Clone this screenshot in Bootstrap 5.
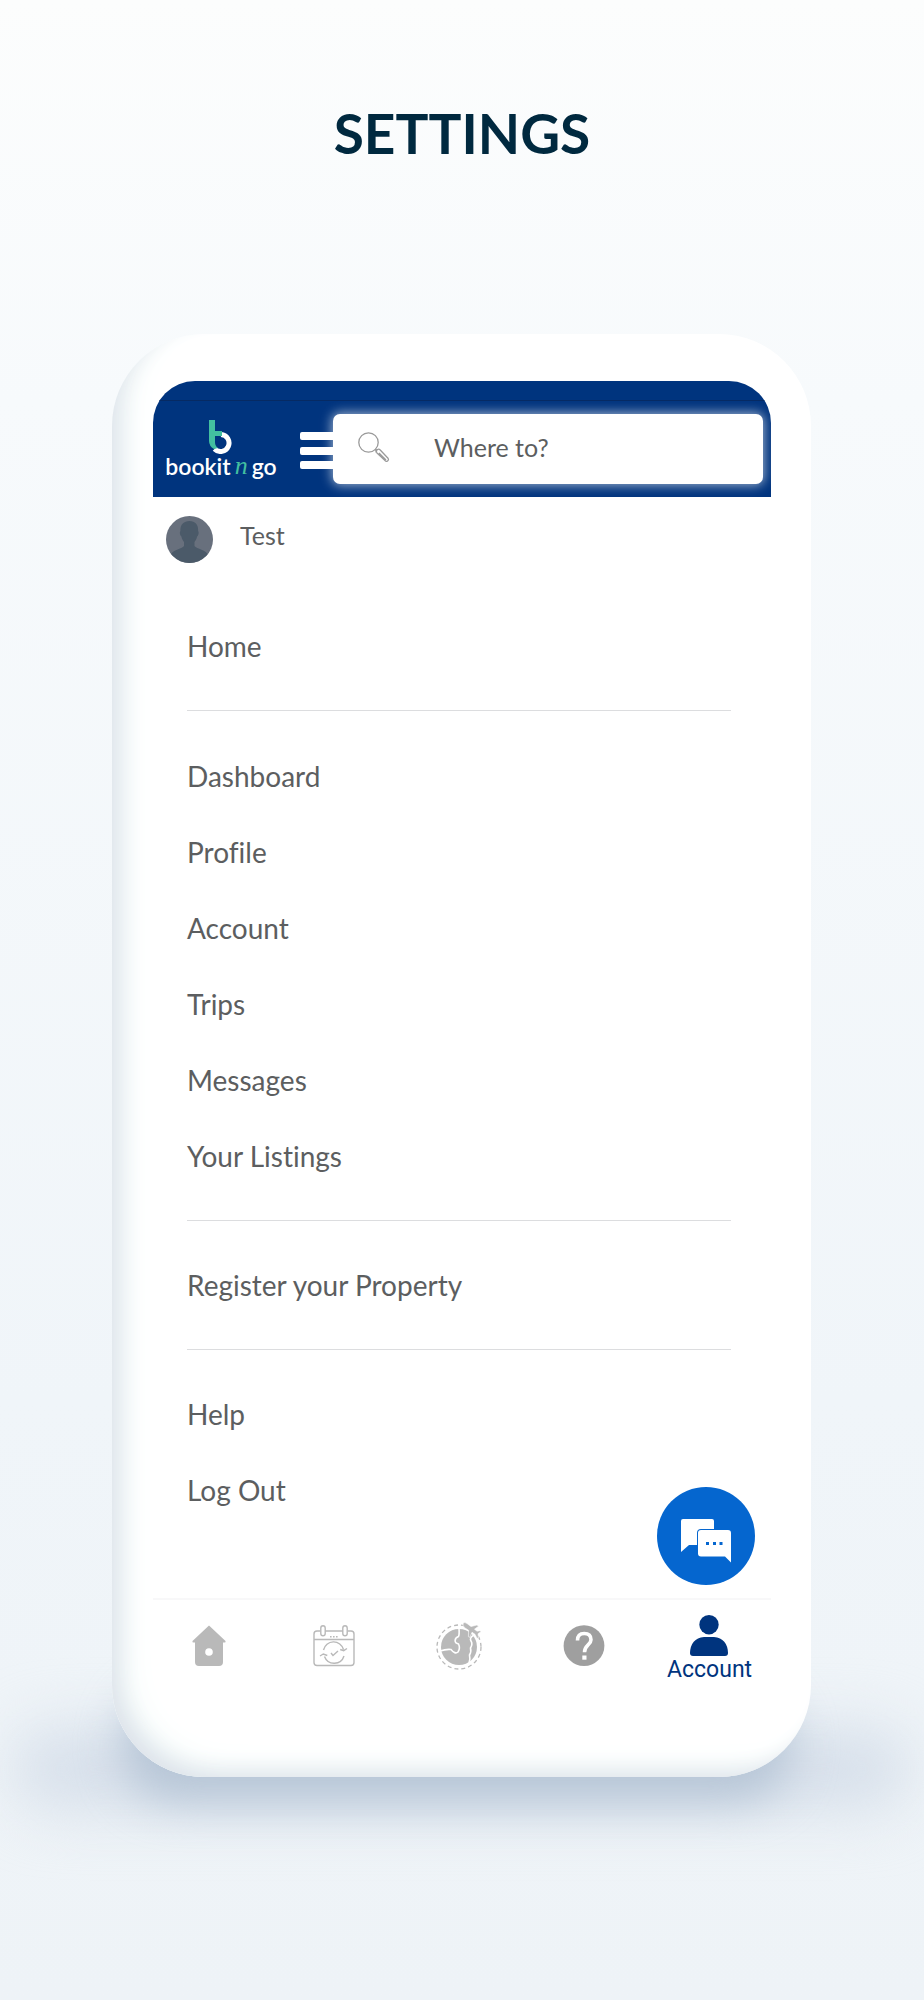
<!DOCTYPE html>
<html lang="en">
<head>
<meta charset="utf-8">
<meta name="viewport" content="width=device-width, initial-scale=1">
<title>Settings</title>
<link href="https://cdn.jsdelivr.net/npm/bootstrap@5.3.0/dist/css/bootstrap.min.css" rel="stylesheet">
<style>
  :root { --navy: #00347e; --mint: #43bfa0; --ink: #5c5e60; }
  body {
    min-height: 100vh; overflow-x: hidden; color: var(--ink);
    font-family: Lato, "Open Sans", sans-serif; font-size: 25px; line-height: 30px; font-variant-ligatures: none;
    background: linear-gradient(#fcfdfd 0, #f7fafc 20%, #f0f5f9 70%, #eef3f7 100%) no-repeat #eef3f7;
  }
  .page-title { margin: 100px 0 168px; font-size: 55px; line-height: 66px; font-weight: 700; color: #00293f; }
  .stage { padding: 0 113px 0 112px; }
  .phone { isolation: isolate; }
  .phone::before, .phone::after { content: ""; position: absolute; z-index: -1; border-radius: 60px; }
  .phone::before { left: 10px; right: 20px; bottom: -24px; height: 110px; background: #b6c5d6; filter: blur(22px); }
  .phone::after { left: -100px; right: -100px; bottom: -32px; height: 80px; background: #d6dfea; filter: blur(30px); z-index: -2; }
  .shell {
    padding: 47px 40px 0 41px; border-radius: 92px; background: #fff;
    box-shadow: inset 14px -12px 22px -8px #dde2ea, inset 26px -20px 34px -14px #eef8f7;
  }
  .screen-top { background: var(--navy); border-radius: 42px 42px 0 0; }
  .status-strip { height: 20px; border-bottom: 1px solid #062a63; }
  .bar { padding: 13px 8px 13px 10px; }
  .brand { width: 116px; color: #fff; font-size: 23px; line-height: 24px; font-weight: 600; text-decoration: none; }
  .brand-n { color: var(--mint); font-family: "Liberation Serif", serif; font-style: italic; font-weight: 400; font-size: 26px; }
  .burger { width: 40px; margin: 4px -7px 0 21px; }
  .search { height: 70px; }
  .search-icon { left: 24px; top: 17px; }
  .search-box {
    height: 70px; padding: 0 16px 4px 101px; border: 0; border-radius: 7px; font-size: 25px; color: var(--ink);
    box-shadow: 0 0 12px 1px rgba(255,255,255,.65);
  }
  .search-box::placeholder { color: var(--ink); }
  .profile { padding: 19px 12px 45px 13px; gap: 27px; }
  .menu { padding: 0 40px 70px 34px; }
  .menu a { display: block; height: 76px; font-size: 28px; line-height: 76px; color: var(--ink); text-decoration: none; }
  .menu hr { margin: 26px 0; border: 0; height: 1px; background: #dcdddf; opacity: 1; }
  .menu hr:first-of-type { margin-bottom: 27px; }
  .chat { right: 16px; bottom: 13px; width: 98px; height: 98px; background: #0566cf; }
  .tabs { height: 179px; padding: 15px 20px 0 14px; border-top: 2px solid #f8f8f9; }
  .tabs a { width: 84px; color: #b9b9b9; text-decoration: none; }
  .tabs a.idle { padding-top: 6px; }
  .tabs a.current { color: var(--navy); font-family: Roboto, sans-serif; font-size: 23px; line-height: 26px; }
</style>
</head>
<body>
<h1 class="page-title text-center">SETTINGS</h1>
<main class="stage">
  <div class="phone position-relative">
    <div class="shell">
      <header class="screen-top overflow-hidden">
        <div class="status-strip"></div>
        <div class="bar d-flex align-items-center">
          <a class="brand d-flex flex-column align-items-center flex-shrink-0" href="#">
            <svg width="26" height="34" viewBox="0 0 26 34" aria-hidden="true">
              <path d="M13 14.500a8.500 8.500 0 1 1-6.500 14.500" fill="none" stroke="#fff" stroke-width="5"/>
              <path d="M1 0h6v11h7v5H7v6q0 4 3 6l-4 1q-5-3-5-8z" fill="#43bfa0"/>
            </svg>
            <span class="d-flex align-items-center">bookit<span class="brand-n px-1">n</span>go</span>
          </a>
          <button class="burger btn p-0 border-0 flex-shrink-0" type="button" aria-label="Open menu">
            <svg class="d-block" width="40" height="38" viewBox="0 0 40 38" fill="#fff"><rect y="0" width="40" height="8" rx="2"/><rect y="15" width="40" height="8" rx="2"/><rect y="29" width="40" height="8" rx="2"/></svg>
          </button>
          <div class="search position-relative flex-grow-1">
            <input id="where" class="search-box form-control" type="text" placeholder="Where to?">
            <label for="where" class="search-icon position-absolute" aria-label="Search destination">
              <svg class="d-block" width="34" height="34" viewBox="0 0 34 34" fill="none" stroke="#9a9a9a" stroke-width="1.300"><circle cx="11.500" cy="11.500" r="9.700"/><path d="M18 18.500l2 2M19 20l1.500-1.500q1.500-.8 2.500.3l8 8.400q1 1.300 0 2.500t-2.500.3l-8.500-8q-1.500-1.500-1-4zM22 22l7 7"/></svg>
            </label>
          </div>
        </div>
      </header>

      <div class="profile d-flex">
        <svg class="flex-shrink-0" width="47" height="47" viewBox="0 0 47 47" aria-hidden="true">
          <defs><clipPath id="face"><circle cx="23.500" cy="23.500" r="23.500"/></clipPath></defs>
          <g clip-path="url(#face)"><path d="M0 0h47v47H0z" fill="#68707d"/><path d="M23.500 5c6 0 9 4 8.600 10 1.200 1 .2 5-1 5.500-.6 3-1.600 4-2.600 5.500v4c2 3 12 3.500 14 10v8H4v-8c2-6.500 12-7 14-10v-4c-1-1.500-2-2.500-2.600-5.500-1.200-.5-2.200-4.500-1-5.500C14 9 17.500 5 23.500 5z" fill="#4b5a69"/></g>
        </svg>
        <span class="pt-1">Test</span>
      </div>

      <div class="position-relative">
        <nav class="menu" aria-label="Settings">
          <a href="#">Home</a>
          <hr>
          <a href="#">Dashboard</a>
          <a href="#">Profile</a>
          <a href="#">Account</a>
          <a href="#">Trips</a>
          <a href="#">Messages</a>
          <a href="#">Your Listings</a>
          <hr>
          <a href="#">Register your Property</a>
          <hr>
          <a href="#">Help</a>
          <a href="#">Log Out</a>
        </nav>
        <button class="chat btn p-0 border-0 rounded-circle position-absolute" type="button" aria-label="Chat">
          <svg class="d-block" width="98" height="98" viewBox="0 0 98 98">
            <path d="M26 32h29q2 0 2 2v8H44q-4 0-4 4v12h-8l-8 7V34q0-2 2-2z" fill="#fff"/>
            <path d="M44 43h27q3 0 3 3v29.500l-6-6H44q-3 0-3-3V46q0-3 3-3z" fill="#fff"/>
            <path d="M49 55h3v3h-3zM56 55h3v3h-3zM62.500 55h3v3h-3z" fill="#0566cf"/>
          </svg>
        </button>
      </div>

      <nav class="tabs d-flex justify-content-between" aria-label="Main">
        <a class="idle text-center" href="#" aria-label="Home">
          <svg class="d-block mx-auto" width="50" height="50" viewBox="0 0 50 50"><path d="M25 4.500L41.500 20q.5 1.500-1 1.500H39V41q0 4-4 4H15q-4 0-4-4V21.500H9.500q-1.500 0-1-1.500z" fill="#b9b9b9"/><circle cx="25" cy="31" r="3.800" fill="#fff"/></svg>
        </a>
        <a class="idle text-center" href="#" aria-label="Bookings">
          <svg class="d-block mx-auto" width="50" height="50" viewBox="0 0 50 50" fill="none" stroke="#b9b9b9" stroke-width="1.400"><path d="M11.500 10H8q-3 0-3 3v28.500Q5 44.500 8 44.500h34q3 0 3-3V13q0-3-3-3h-3.500M16 10h18M5 18.500h40"/><rect x="11.800" y="4.700" width="4.400" height="10" rx="2.200"/><rect x="33.800" y="4.700" width="4.400" height="10" rx="2.200"/><path d="M21 15.700h8" stroke-dasharray="1.600 1.400"/><path d="M14.500 29a10.300 10.300 0 0 1 20-.500M35 35a10.300 10.300 0 0 1-19.500.500M38 27.500l-3.300 2.200-3.500-1.200M11 35l3.300-2 4 1.500M22 32l2 2.500 5-4.500"/></svg>
        </a>
        <a class="idle text-center" href="#" aria-label="Trips">
          <svg class="d-block mx-auto" width="50" height="50" viewBox="0 0 50 50"><circle cx="25" cy="26" r="22" fill="none" stroke="#b9b9b9" stroke-width="1.300" stroke-dasharray="4 3"/><circle cx="25" cy="26" r="18" fill="#b9b9b9"/><path d="M6 30q6-2 11-1.500 4 5 7 2.500c2-3 1.500-6 .500-8-5-1-4-6 0-7.500q1-2 .5-8M40 14q-5 3-3 6 2 3-.5 7 1 4-1 7 1 4-.5 8" fill="none" stroke="#fff" stroke-width="1.600"/><path d="M29 2.500q1.500-2 4 0l4 3 6-1.500 1.500 1.200-4 3 2.500 2 3-.5 1 1-3 2 .5 4-1.500.6-2-4-3-2-2 5-1.600-.6.200-6.500-4-2.500q-2-2-1.600-4.200z" fill="#b9b9b9" stroke="#fff" stroke-width=".6"/></svg>
        </a>
        <a class="idle text-center" href="#" aria-label="Help">
          <svg class="d-block mx-auto" width="50" height="50" viewBox="0 0 50 50"><circle cx="25" cy="24.700" r="20.400" fill="#9f9f9f"/><path d="M18.500 19.500q0-7 6.700-7t6.800 6.200c0 5-6.500 5.500-6.500 12.500" fill="none" stroke="#fff" stroke-width="3.600"/><path d="M23.300 34.500h4.200v4.200h-4.200z" fill="#fff"/></svg>
        </a>
        <a class="current text-center" href="#" aria-current="page">
          <svg class="d-block mx-auto" width="40" height="42" viewBox="0 0 40 42" fill="#00347e"><circle cx="20" cy="9.700" r="9.700"/><path d="M15 22h10q13.500 1.500 14 16 0 3-3 3H4q-3 0-3-3Q1.500 23.500 15 22z"/></svg>
          Account
        </a>
      </nav>
    </div>
  </div>
</main>
<script src="https://cdn.jsdelivr.net/npm/bootstrap@5.3.0/dist/js/bootstrap.bundle.min.js"></script>
</body>
</html>
